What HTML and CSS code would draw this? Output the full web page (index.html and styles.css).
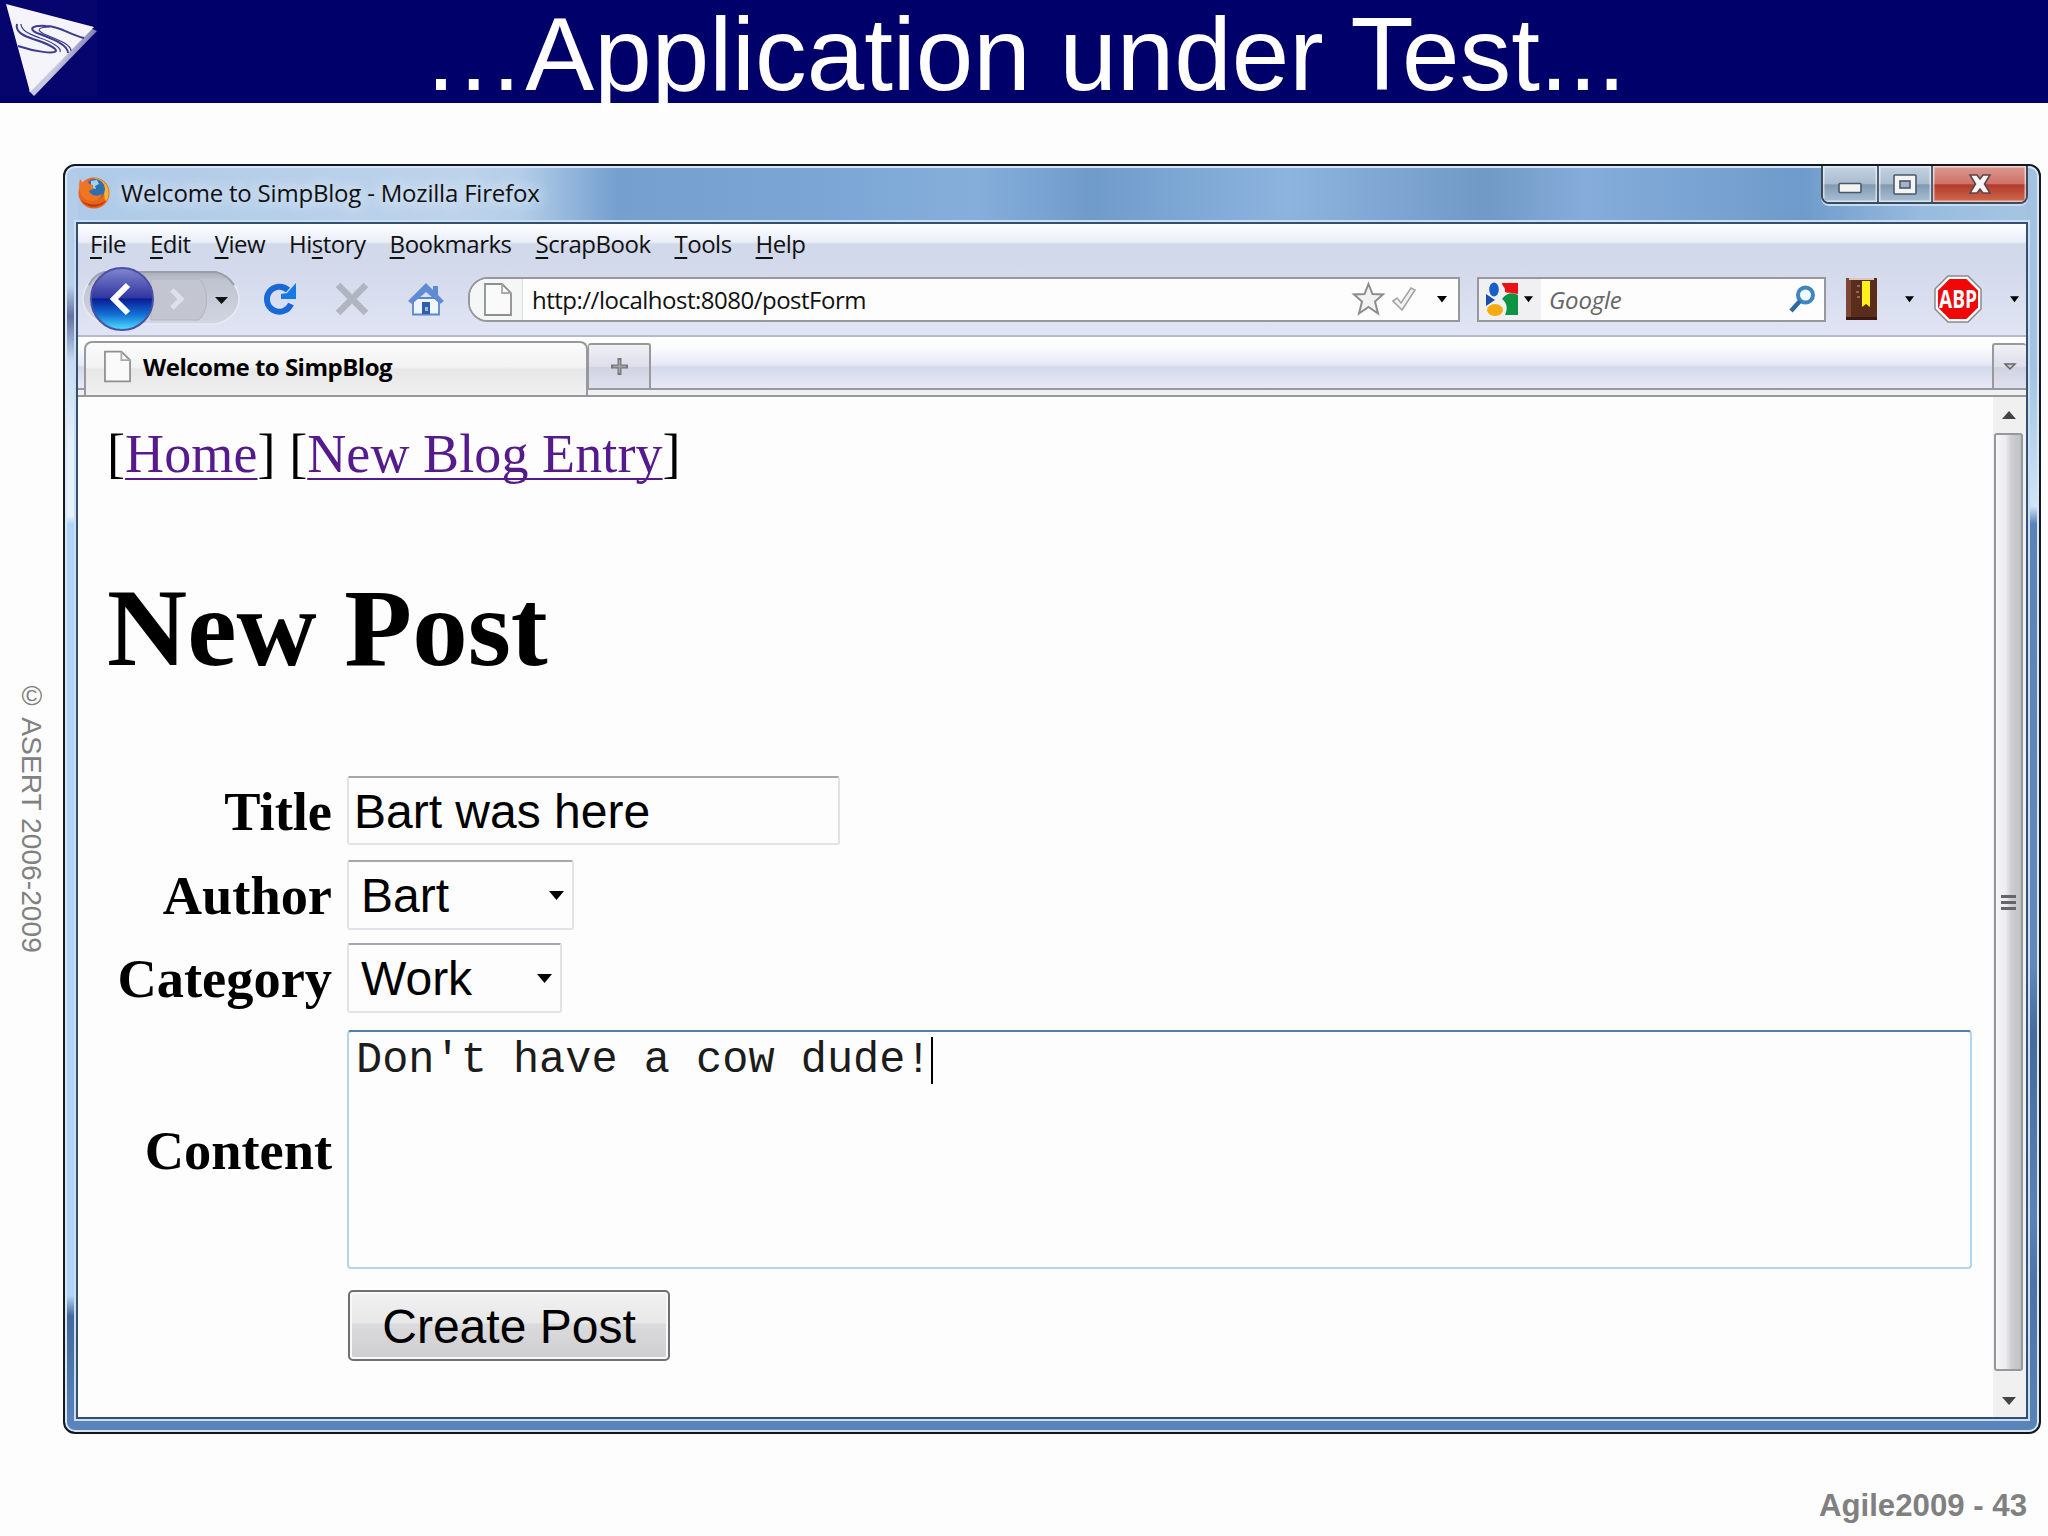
FILE: index.html
```html
<!DOCTYPE html>
<html lang="en">
<head>
    <meta charset="UTF-8">
    <title>Application under Test</title>
    <link rel="stylesheet" href="styles.css">
</head>
<body>

    <header class="slide-header">
        <svg class="logo" width="100" height="100" viewBox="0 0 100 100">
            <defs>
                <linearGradient id="edge" x1="0" y1="0" x2="1" y2="0.6">
                    <stop offset="0.55" stop-color="#c8c8e0"/>
                    <stop offset="0.8" stop-color="#6a6aa8"/>
                </linearGradient>
            </defs>
            <rect width="97" height="97" fill="#05056d"/>
            <path d="M90 28 L97 31 L34 96 L29 91 Z" fill="url(#edge)"/>
            <path d="M6 4 L94 27 L30 92 Z" fill="#f4f4fa"/>
            <g fill="none" stroke="#3c3c8c">
                <path d="M17 24 C15 32 24 36 33 39 C46 43 56 48 56 51 C54 54 36 52 18 46" stroke-width="2"/>
                <path d="M21 24 C21 31 30 34 40 38 C52 42 62 48 60 52" stroke-width="1.2"/>
                <path d="M84 38 C68 34 60 26 46 26 C32 25 28 29 37 33 C50 38 68 44 68 53" stroke-width="2"/>
                <path d="M50 27 C38 27 36 30 44 34 C56 39 71 44 71 51" stroke-width="1.2"/>
            </g>
        </svg>
        <h1>…Application under Test...</h1>
    </header>

    <div class="slide-body">
        <div class="copyright">© ASERT 2006-2009</div>

        <div class="window">
            <div class="titlebar">
                <svg class="firefox" width="34" height="34" viewBox="0 0 34 34">
                    <circle cx="17" cy="17" r="15.5" fill="#e8641b"/>
                    <path d="M17 2 A15 15 0 0 1 30 24 C27 28 28 18 26 12 C24 6 20 4 17 2 Z" fill="#f9b233"/>
                    <circle cx="18" cy="13" r="10" fill="#2f6fb0"/>
                    <path d="M14 5 L20 4 L22 8 L18 10 L19 13 L14 12 Z" fill="#9fd2ee"/>
                    <path d="M3 3 L6 7 L10 4 L12 8 L16 9 L16 13 L12 15 C14 20 20 21 25 18 C23 25 12 28 6 21 C1 15 2 8 3 3 Z" fill="#ee7623"/>
                    <path d="M4 24 C10 33 24 33 29 24 C22 30 12 30 4 24 Z" fill="#b93a12"/>
                </svg>
                <span class="window-title">Welcome to SimpBlog - Mozilla Firefox</span>
                <div class="window-buttons">
                    <span class="win-btn">
                        <svg width="24" height="12" viewBox="0 0 24 12"><rect x="1" y="1.5" width="22" height="9" rx="1" fill="#f4f4f4" stroke="#4c5766" stroke-width="1.6"/></svg>
                    </span>
                    <span class="win-btn max">
                        <svg width="24" height="21" viewBox="0 0 24 21"><rect x="1" y="1" width="22" height="19" rx="1" fill="#f4f4f4" stroke="#4c5766" stroke-width="1.6"/><rect x="7" y="7" width="10" height="7" fill="#9fb4cb" stroke="#4c5766" stroke-width="1.6"/></svg>
                    </span>
                    <span class="win-btn close">
                        <svg width="22" height="20" viewBox="0 0 22 20"><path d="M1 1 H8 L11 5 L14 1 H21 L15.5 10 L21 19 H14 L11 15 L8 19 H1 L6.5 10 Z" fill="#f6f6f6" stroke="#5b4650" stroke-width="1.6"/></svg>
                    </span>
                </div>
            </div>

            <div class="client">
                <nav class="menubar">
                    <span><u>F</u>ile</span>
                    <span><u>E</u>dit</span>
                    <span><u>V</u>iew</span>
                    <span>Hi<u>s</u>tory</span>
                    <span><u>B</u>ookmarks</span>
                    <span><u>S</u>crapBook</span>
                    <span><u>T</u>ools</span>
                    <span><u>H</u>elp</span>
                </nav>

                <div class="toolbar">
                    <svg class="nav-buttons" width="164" height="68" viewBox="0 0 164 68">
                        <defs>
                            <linearGradient id="pill" x1="0" y1="0" x2="0" y2="1">
                                <stop offset="0" stop-color="#a9adb9"/>
                                <stop offset="0.15" stop-color="#bfc3d0"/>
                                <stop offset="1" stop-color="#d2d5e2"/>
                            </linearGradient>
                            <linearGradient id="back" x1="0" y1="0" x2="0" y2="1">
                                <stop offset="0" stop-color="#8286cf"/>
                                <stop offset="0.48" stop-color="#3036a0"/>
                                <stop offset="0.5" stop-color="#0a1c93"/>
                                <stop offset="0.75" stop-color="#1270d6"/>
                                <stop offset="1" stop-color="#4fe3ff"/>
                            </linearGradient>
                        </defs>
                        <path d="M24 7 H135 C148 10 158 22 158 34 C158 46 148 56 135 59 H24 C12 56 2 46 2 34 C2 22 12 10 24 7 Z" fill="url(#pill)" stroke="#e8eaf4" stroke-width="1.5"/>
                        <path d="M8 20 C12 12 18 8 24 7 H135 C143 9 149 14 153 20" fill="none" stroke="#9a9eaa" stroke-width="2"/>
                        <path d="M70 14 H118 C128 22 128 46 118 55 H70 Z" fill="#c3c6d1" stroke="#b2b5c1" stroke-width="1"/>
                        <path d="M91 25 L100 34 L91 43" fill="none" stroke="#dfe1ea" stroke-width="5"/>
                        <circle cx="41" cy="34" r="31" fill="url(#back)" stroke="#4a50a4" stroke-width="2"/>
                        <path d="M47 20 L33 34 L47 48" fill="none" stroke="#fff" stroke-width="6"/>
                        <path d="M134 32 H147 L140.5 39 Z" fill="#111"/>
                    </svg>
                    <svg class="reload" width="34" height="34" viewBox="0 0 34 34">
                        <path d="M28 22 A12.5 12.5 0 1 1 25 8" fill="none" stroke="#1868d8" stroke-width="6"/>
                        <path d="M33 1 V17 H18 V12 L24 11 Z" fill="#1778e8"/>
                    </svg>
                    <svg class="stop" width="34" height="34" viewBox="0 0 34 34">
                        <path d="M3 3 L31 31 M31 3 L3 31" stroke="#b1b5c0" stroke-width="6.5"/>
                    </svg>
                    <svg class="home" width="38" height="34" viewBox="0 0 38 34">
                        <path d="M6 16 H32 V32.5 H6 Z" fill="#eef5fd" stroke="#5b86cc" stroke-width="1.8"/>
                        <path d="M1 19 L19 1 L26 8 V4 H31 V13 L37 19 L33 22 L19 10 L5 22 Z" fill="#5f8bd2"/>
                        <rect x="15" y="20" width="8" height="12" fill="#2f5fa8"/>
                        <rect x="18" y="25" width="3" height="4" fill="#9fb6d8"/>
                    </svg>
                    <div class="urlbar">
                        <span class="identity">
                            <svg width="28" height="33" viewBox="0 0 28 33"><path d="M1 1 H18 L27 10 V32 H1 Z" fill="#fafafa" stroke="#8e8e8e" stroke-width="1.8"/><path d="M18 1 V10 H27" fill="none" stroke="#a8a8a8" stroke-width="1.8"/></svg>
                        </span>
                        <span class="url">http://localhost:8080/postForm</span>
                        <svg width="33" height="34" viewBox="0 0 33 34"><path d="M16.5 2 L20.5 12 L31 12.5 L23 19.5 L26 31.5 L16.5 25 L7 31.5 L10 19.5 L2 12.5 L12.5 12 Z" fill="#f2f2f2" stroke="#8c8c8c" stroke-width="2"/></svg>
                        <svg class="check" width="26" height="26" viewBox="0 0 26 26"><path d="M2 15 L6 12 L10 17 L20 2 L24 4 L11 24 Z" fill="#f4f4f4" stroke="#a4a4a4" stroke-width="1.6"/></svg>
                        <svg class="arrow" width="10" height="7" viewBox="0 0 10 7"><path d="M0 0 H10 L5 6.5 Z"/></svg>
                    </div>
                    <div class="searchbar">
                        <span class="engine">
                            <svg width="34" height="34" viewBox="0 0 34 34">
                                <path d="M17 1 H33 V12 C24 10 19 12 20 8 C20 5 17 4 17 1 Z" fill="#ee1111"/>
                                <path d="M17 17 C21 11 27 10 33 13 V33 H20 C23 26 22 21 17 17 Z" fill="#0b9444"/>
                                <ellipse cx="9" cy="7.5" rx="4.8" ry="7" fill="#1a5fc8"/>
                                <path d="M1 12 L10 18 L1 24 Z" fill="#1a4fa8"/>
                                <ellipse cx="10" cy="28" rx="8" ry="6" fill="#f5ab10"/>
                            </svg>
                            <svg width="9" height="7" viewBox="0 0 10 7"><path d="M0 0 H10 L5 6.5 Z"/></svg>
                        </span>
                        <span class="placeholder">Google</span>
                        <svg width="28" height="28" viewBox="0 0 28 28"><circle cx="17.5" cy="10" r="7.5" fill="#f2faff" stroke="#3f86c0" stroke-width="4"/><path d="M12 16 L3 26" stroke="#2d6ba8" stroke-width="4.5"/></svg>
                    </div>
                    <svg class="book" width="31" height="42" viewBox="0 0 31 42">
                        <rect width="31" height="42" fill="#5b2c1c"/>
                        <rect width="5" height="42" fill="#7c4632"/>
                        <rect x="3" width="25" height="2" fill="#d8c8c0"/>
                        <rect y="39" width="31" height="3" fill="#3a1a10"/>
                        <path d="M11 8 H14 M10 14 H13 M11 19 H14" stroke="#a07c6c" stroke-width="1.5"/>
                        <path d="M16 3 H24 V29 L20 26 L16 29 Z" fill="#fdf01c"/>
                    </svg>
                    <svg class="arrow-book" width="9" height="7" viewBox="0 0 10 7"><path d="M0 0 H10 L5 6.5 Z"/></svg>
                    <svg class="abp" width="48" height="48" viewBox="0 0 48 48">
                        <path d="M14 1 H34 L47 14 V34 L34 47 H14 L1 34 V14 Z" fill="#fff" stroke="#8a8a8a" stroke-width="1.5"/>
                        <path d="M15.5 4 H32.5 L44 15.5 V32.5 L32.5 44 H15.5 L4 32.5 V15.5 Z" fill="#f00808"/>
                        <text x="24" y="33" text-anchor="middle" textLength="38" lengthAdjust="spacingAndGlyphs" class="abp-text">ABP</text>
                    </svg>
                    <svg class="arrow-abp" width="9" height="7" viewBox="0 0 10 7"><path d="M0 0 H10 L5 6.5 Z"/></svg>
                </div>

                <div class="tabstrip">
                    <div class="tab">
                        <svg width="27" height="33" viewBox="0 0 28 33"><path d="M1 1 H18 L27 10 V32 H1 Z" fill="#fafafa" stroke="#8e8e8e" stroke-width="1.8"/><path d="M18 1 V10 H27" fill="none" stroke="#a8a8a8" stroke-width="1.8"/></svg>
                        <span>Welcome to SimpBlog</span>
                    </div>
                    <div class="new-tab">
                        <svg width="17" height="17" viewBox="0 0 17 17"><path d="M8.5 0 V17 M0 8.5 H17" stroke="#77777c" stroke-width="4"/><path d="M8.5 2 V15 M2 8.5 H15" stroke="#a4a4a8" stroke-width="1.5"/></svg>
                    </div>
                    <div class="tab-list">
                        <svg width="12" height="8" viewBox="0 0 12 8"><path d="M1 1 H11 L6 6 Z" fill="#ccc" stroke="#666" stroke-width="1.5"/></svg>
                    </div>
                </div>

                <div class="viewport">
                    <main class="page">
                        <div class="links">[<a href="#">Home</a>] [<a href="#">New Blog Entry</a>]</div>
                        <h1>New Post</h1>
                        <form>
                            <div class="row">
                                <label for="title">Title</label>
                                <input type="text" id="title" value="Bart was here">
                            </div>
                            <div class="row row-author">
                                <label for="author">Author</label>
                                <div class="select author">
                                    <select id="author"><option>Bart</option></select>
                                    <svg width="15" height="9" viewBox="0 0 15 9"><path d="M0 0 H15 L7.5 9 Z"/></svg>
                                </div>
                            </div>
                            <div class="row row-category">
                                <label for="category">Category</label>
                                <div class="select category">
                                    <select id="category"><option>Work</option></select>
                                    <svg width="15" height="9" viewBox="0 0 15 9"><path d="M0 0 H15 L7.5 9 Z"/></svg>
                                </div>
                            </div>
                            <div class="row row-content">
                                <label for="content">Content</label>
                                <div class="content-box">
                                    <textarea id="content" spellcheck="false">Don't have a cow dude!</textarea>
                                    <span class="caret"></span>
                                </div>
                            </div>
                            <button type="button">Create Post</button>
                        </form>
                    </main>
                    <div class="scrollbar">
                        <svg width="14" height="8" viewBox="0 0 14 8"><path d="M0 8 L7 0 L14 8 Z" fill="#444"/></svg>
                        <div class="thumb">
                            <span></span>
                            <span></span>
                            <span></span>
                        </div>
                        <svg width="14" height="8" viewBox="0 0 14 8"><path d="M0 0 H14 L7 8 Z" fill="#444"/></svg>
                    </div>
                </div>
            </div>
        </div>
    </div>

    <footer class="slide-footer">Agile2009 - 43</footer>

</body>
</html>
```

FILE: styles.css
```css
* {
    box-sizing: border-box;
}
body {
    margin: 0;
    width: 2048px;
    height: 1536px;
    overflow: hidden;
    background-color: #fdfdfd;
    font-family: "Liberation Sans", Arial, sans-serif;
}
svg {
    display: block;
    flex: none;
    overflow: visible;
}

/* slide */
.slide-header {
    position: relative;
    height: 103px;
    background-color: #00006b;
}
.slide-header h1 {
    margin: 0;
    font-size: 103.3px;
    font-weight: normal;
    line-height: 108px;
    text-align: center;
    color: white;
}
.logo {
    position: absolute;
    top: 0;
    left: 0;
}
.slide-body {
    display: flex;
    margin-top: 61px;
    height: 1270px;
}
.copyright {
    width: 63px;
    padding: 515px 0 0 16px;
    writing-mode: vertical-rl;
    white-space: nowrap;
    display: flex;
    flex-direction: column;
    justify-content: flex-end;
    font-size: 28.2px;
    line-height: 32px;
    color: #808080;
}
.slide-footer {
    padding: 57px 21px 0 0;
    text-align: right;
    font-size: 31.2px;
    font-weight: bold;
    line-height: 30px;
    color: #808080;
}

/* window frame */
.window {
    width: 1978px;
    height: 1270px;
    padding: 0 11px 13px;
    border: 2px solid #14181e;
    border-radius: 12px;
    box-shadow: inset 0 0 0 2px #d6e7f7;
    background:
        linear-gradient(#b2cce8 0, #b8d0ea 120px, #63719f 150px, #c5dbf2 195px, #e6f1fb 280px, #e6f1fb 350px, #b0d4f5 358px, #b0d4f5 1130px, #44699b 1150px, #5a86bf 1266px) left top / 13px 100% no-repeat,
        linear-gradient(#a2c2e0 0, #a2c2e0 200px, #d0e4f6 340px, #5a83b7 358px, #6189ba 800px, #456a9b 870px, #5a83b7 1050px, #4b73a8 1120px, #5a83b7 1266px) right top / 13px 100% no-repeat,
        linear-gradient(90deg, #aecae8 0, #bdd3eb 20%, #b4cee9 23%, #749fcf 28%, #7aa5d4 38%, #86aedb 46%, #6f9bcb 52%, #8db4de 62%, #7199c6 72%, #85acda 77%, #6e9bcb 88%, #98bbde 94%, #a6c6e3 100%) left top / 100% 70px no-repeat,
        #5a84bb;
}
.titlebar {
    display: flex;
    height: 56px;
}
.firefox {
    margin: 10px 0 0 1px;
}
.window-title {
    margin-left: 10px;
    font-family: "Open Sans", "Noto Sans", sans-serif;
    font-size: 24px;
    line-height: 54px;
    letter-spacing: -0.2px;
    color: #111;
    text-shadow: 0 0 14px #dfeaf7, 0 0 14px #dfeaf7;
}
.window-buttons {
    display: flex;
    width: 207px;
    height: 38px;
    margin: 0 0 0 auto;
    border: 2px solid #3b4a5c;
    border-top: none;
    border-radius: 0 0 8px 8px;
    overflow: hidden;
    box-shadow: 0 2px 0 #c6dcf0;
}
.win-btn {
    display: flex;
    align-items: center;
    justify-content: center;
    width: 56px;
    padding-top: 8px;
    border-right: 2px solid #4e6078;
    box-shadow: inset 0 0 0 1.5px rgba(255, 255, 255, 0.6);
    background: linear-gradient(#c3d3e3 0, #a9bccf 50%, #8399b1 52%, #a8c0d6 100%);
}
.win-btn.max {
    width: 54px;
    padding-top: 0;
}
.win-btn.close {
    width: 93px;
    padding-top: 0;
    border-right: none;
    background: linear-gradient(#dc9a92 0, #cf7266 50%, #b23a29 52%, #cf6a50 100%);
}
.client {
    display: flex;
    flex-direction: column;
    height: 1197px;
    border: 2px solid #34506e;
    outline: 2px solid #c9def2;
    background: #fdfdfd;
}

/* browser chrome */
.menubar, .toolbar, .tabstrip {
    flex: none;
    font-family: "Open Sans", "Noto Sans", sans-serif;
    font-size: 24px;
    color: #111;
}
.menubar {
    display: flex;
    gap: 24px;
    height: 39px;
    padding-left: 12px;
    line-height: 39px;
    letter-spacing: -0.5px;
    background: linear-gradient(#fdfeff 0, #e9eef8 18px, #d2d9ea 20px, #d2d9ea 100%);
}
.menubar u {
    text-underline-offset: 4px;
    text-decoration-thickness: 2px;
}
.toolbar {
    display: flex;
    align-items: center;
    height: 74px;
    padding-left: 3px;
    border-bottom: 2px solid #b6b9cb;
    background: linear-gradient(#d2d9ea, #e1e4f5);
}
.reload {
    margin-left: 18px;
}
.stop {
    margin-left: 38px;
}
.home {
    margin-left: 38px;
}
.urlbar {
    display: flex;
    align-items: center;
    width: 992px;
    height: 45px;
    margin-left: 23px;
    padding-right: 11px;
    border: 2px solid #96989c;
    border-radius: 20px 0 0 20px;
    overflow: hidden;
    background: #fdfdfd;
}
.identity {
    display: flex;
    align-items: center;
    width: 53px;
    height: 100%;
    padding-left: 14px;
    border-right: 1px solid #ddd;
    background: #f5f6f6;
}
.url {
    flex: 1;
    padding-left: 9px;
    letter-spacing: -0.5px;
}
.check {
    margin-left: 6px;
}
.arrow {
    margin-left: 20px;
}
.searchbar {
    display: flex;
    align-items: center;
    width: 349px;
    height: 45px;
    margin-left: 17px;
    padding-right: 8px;
    border: 2px solid #96989c;
    background: #fdfdfd;
}
.engine {
    display: flex;
    align-items: center;
    gap: 5px;
    width: 62px;
    height: 100%;
    padding-left: 6px;
    background: #f0f0f2;
}
.placeholder {
    flex: 1;
    padding-left: 8px;
    font-style: italic;
    letter-spacing: -0.2px;
    color: #666;
}
.book {
    margin-left: 20px;
}
.arrow-book {
    margin-left: 28px;
}
.abp {
    margin-left: 20px;
}
.abp-text {
    font-family: "Open Sans", sans-serif;
    font-size: 25px;
    font-weight: bold;
    fill: white;
}
.arrow-abp {
    margin-left: 28px;
}
.tabstrip {
    display: flex;
    align-items: flex-end;
    height: 60px;
    padding-bottom: 7px;
    border-bottom: 2px solid #97999b;
    background:
        linear-gradient(#f0f0f2, #f0f0f2) left bottom / 100% 5px no-repeat,
        linear-gradient(#97999b, #97999b) left bottom 5px / 100% 2px no-repeat,
        linear-gradient(#fff 0, #fbfcfe 10px, #e6e9f5 28px, #d3d9ec 30px, #e9e8f6 51px);
}
.tab {
    display: flex;
    align-items: center;
    width: 504px;
    height: 54px;
    margin: 0 0 -7px 6px;
    padding: 0 0 5px 18px;
    border: 2px solid #97999b;
    border-bottom: none;
    border-radius: 8px 8px 0 0;
    background: linear-gradient(#fbfbfb 0, #f3f3f3 24px, #e7e7e8 26px, #f0f0f1 100%);
    font-weight: bold;
}
.tab span {
    margin-left: 12px;
    letter-spacing: -0.5px;
    color: #000;
}
.new-tab, .tab-list {
    display: flex;
    align-items: center;
    justify-content: center;
    width: 63px;
    height: 45px;
    border: 2px solid #97999b;
    border-left-width: 1px;
    border-bottom: none;
    border-radius: 3px 3px 0 0;
    background: linear-gradient(#f0f0f4 0, #dcdeea 50%, #d0d3e2 52%, #dfe0ee 100%);
}
.tab-list {
    width: 34px;
    margin-left: auto;
    border-left-width: 2px;
    border-right: none;
}

/* page */
.viewport {
    display: flex;
    flex: 1;
    min-height: 0;
}
.page {
    flex: 1;
    padding: 27px 21px 0 29px;
    font-family: "Liberation Serif", "Times New Roman", serif;
    font-size: 54.4px;
    color: #000;
}
.links {
    font-size: 54px;
    line-height: 60px;
    letter-spacing: 0.1px;
}
.links a {
    color: #551a8b;
    text-decoration-thickness: 2px;
    text-underline-offset: 6px;
    text-decoration-skip-ink: none;
}
.page h1 {
    margin: 82px 0 86px;
    font-size: 111px;
    line-height: 124px;
}
.row {
    display: flex;
    align-items: center;
    gap: 15px;
    height: 69px;
}
.row-author {
    height: 70px;
    margin-top: 15px;
}
.row-category {
    height: 70px;
    margin-top: 13px;
}
.row-content {
    height: 239px;
    margin-top: 17px;
}
label {
    width: 225px;
    padding-top: 2px;
    font-weight: bold;
    text-align: right;
    direction: rtl;
    white-space: nowrap;
}
input, select, textarea, button {
    font-family: "Liberation Sans", Arial, sans-serif;
    font-size: 48px;
    color: #000;
}
input, .select {
    height: 100%;
    border: 2px solid #e2e3ea;
    border-top-color: #a5a6ae;
    border-radius: 3px;
    background: #fdfdfd;
}
input {
    width: 493px;
    padding: 2px 0 0 5px;
}
.select {
    display: flex;
    align-items: center;
    justify-content: space-between;
    padding-right: 8px;
}
.select select {
    padding: 1px 0 0 12px;
    border: none;
    background: none;
    appearance: none;
}
.author {
    width: 227px;
}
.category {
    width: 215px;
}
.content-box {
    position: relative;
    flex: 1;
    height: 100%;
}
textarea {
    display: block;
    width: 100%;
    height: 100%;
    padding: 4px 7px;
    border: 2px solid #b5d3ea;
    border-top-color: #5580a4;
    border-radius: 4px;
    background: #fdfdfd;
    font-family: "Liberation Mono", "Courier New", monospace;
    font-size: 43.6px;
    color: #1c1c1c;
    resize: none;
    overflow: hidden;
    outline: none;
}
.caret {
    position: absolute;
    top: 7px;
    left: 584px;
    width: 2px;
    height: 47px;
    background: #000;
}
button {
    display: block;
    width: 322px;
    height: 71px;
    margin: 21px 0 0 241px;
    padding: 1px 0 0;
    border: 2px solid #707070;
    border-radius: 5px;
    box-shadow: inset 0 0 0 2px #f8f8f8;
    background: linear-gradient(#f2f1f2 0, #e9e8e9 46%, #dbdadc 48%, #cecdcf 100%);
}

/* scrollbar */
.scrollbar {
    display: flex;
    flex-direction: column;
    align-items: center;
    width: 33px;
    padding: 14px 2px 0 0;
    background: #f0f0f1;
}
.thumb {
    display: flex;
    flex: none;
    flex-direction: column;
    align-items: center;
    justify-content: center;
    gap: 3px;
    width: 29px;
    height: 938px;
    margin: 14px 0 26px;
    border: 2px solid #97989b;
    border-radius: 3px;
    background: linear-gradient(90deg, #f6f6f7 0, #ececee 40%, #cfcfd2 60%, #c0c1c4 100%);
}
.thumb span {
    width: 15px;
    height: 3px;
    background: #66666a;
}
```
